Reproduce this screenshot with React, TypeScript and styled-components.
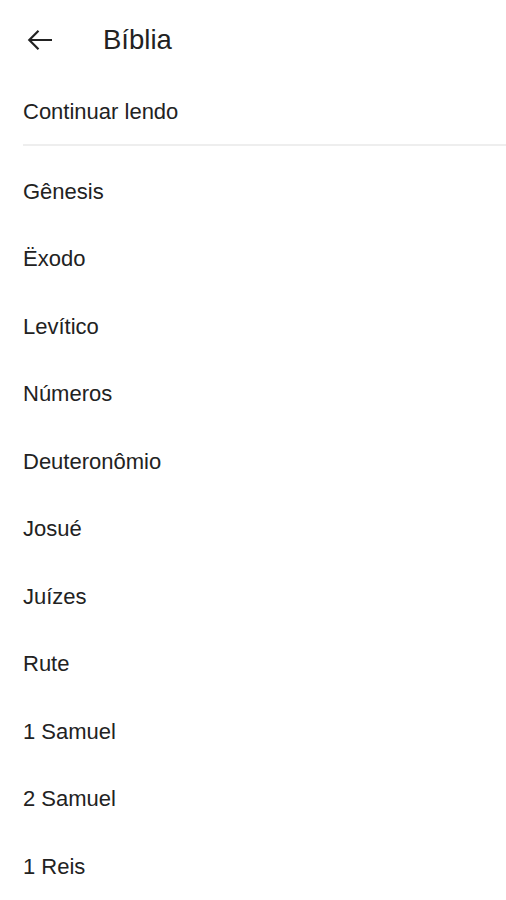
import React from "react";
import styled, { createGlobalStyle } from "styled-components";

const GlobalStyle = createGlobalStyle`
  html, body {
    margin: 0;
    padding: 0;
    background: #fff;
    font-family: "Liberation Sans", Arial, sans-serif;
  }
`;

const Page = styled.div`
  width: 506px;
  height: 900px;
  overflow: hidden;
  background: #fff;
`;

const Header = styled.header`
  display: flex;
  align-items: center;
  height: 80px;
  padding-left: 27px;
`;

const BackButton = styled.button`
  all: unset;
  display: flex;
  align-items: center;
  justify-content: center;
  width: 26px;
  height: 26px;
  cursor: pointer;
  color: #222;
`;

const Title = styled.h1`
  margin: 0 0 0 50px;
  font-size: 27.5px;
  font-weight: 400;
  color: #222;
`;

const Section = styled.div`
  margin-left: 23px;
  height: 64px;
  display: flex;
  align-items: center;
  border-bottom: 2px solid #eeeeee;
  font-size: 22px;
  color: #222;
`;

const List = styled.ul`
  list-style: none;
  margin: 0;
  padding: 12px 0 0 23px;
`;

const Item = styled.li`
  height: 67.5px;
  display: flex;
  align-items: center;
  font-size: 22px;
  color: #222;
`;

const books = [
  "Gênesis",
  "Ëxodo",
  "Levítico",
  "Números",
  "Deuteronômio",
  "Josué",
  "Juízes",
  "Rute",
  "1 Samuel",
  "2 Samuel",
  "1 Reis",
];

export default function App() {
  return (
    <Page>
      <GlobalStyle />
      <Header>
        <BackButton aria-label="Voltar">
          <svg width="26" height="26" viewBox="0 0 26 26" fill="none">
            <path
              d="M25 13H2.5M11.5 3.8L2.3 13l9.2 9.2"
              stroke="currentColor"
              strokeWidth="2.2"
            />
          </svg>
        </BackButton>
        <Title>Bíblia</Title>
      </Header>
      <Section>Continuar lendo</Section>
      <List>
        {books.map((b) => (
          <Item key={b}>{b}</Item>
        ))}
      </List>
    </Page>
  );
}
